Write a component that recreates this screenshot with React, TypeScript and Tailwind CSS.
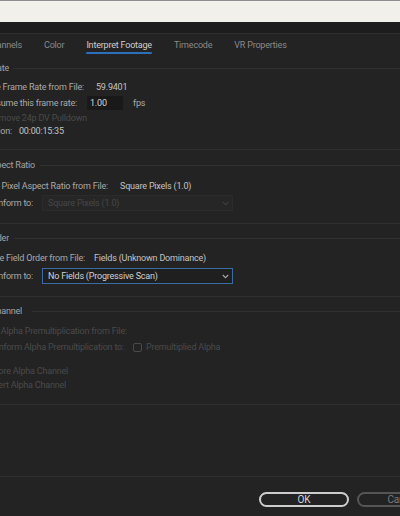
import React from "react";

// Clipped label: the start of the text runs off the left edge of the window,
// so the label is pinned by its right end.
function Label({ end, children, dim }: { end: number; children: React.ReactNode; dim?: boolean }) {
  return (
    <span
      className={
        "flex shrink-0 justify-end overflow-hidden whitespace-nowrap " +
        (dim ? "text-[#4a4a4a]" : "text-[#a9a9a9]")
      }
      style={{ width: end }}
    >
      {children}
    </span>
  );
}

function Chevron({ dim }: { dim?: boolean }) {
  return (
    <svg width="7" height="5" viewBox="0 0 7 5" className="shrink-0">
      <path d="M0.8 1 L3.5 3.7 L6.2 1" fill="none" stroke={dim ? "#3c3c3c" : "#a8a8a8"} strokeWidth="1.1" />
    </svg>
  );
}

function Legend({ end, lineStart, children }: { end: number; lineStart: number; children: React.ReactNode }) {
  return (
    <div className="flex h-[12px] items-center">
      <Label end={end}>
        <span className="text-[#a4a4a4]">{children}</span>
      </Label>
      <div className="h-px flex-1 bg-[#303030]" style={{ marginLeft: lineStart - end }} />
    </div>
  );
}

const Rule = ({ className }: { className: string }) => <div className={"h-px w-full bg-[#2f2f2f] " + className} />;

export default function App() {
  return (
    <div className="h-[516px] w-[400px] overflow-hidden bg-[#232323] font-['Roboto',sans-serif] text-[9px] leading-[12px] tracking-[-0.2px]">
      {/* window behind */}
      <div className="h-[22px] border-t border-[#8e8e8e] bg-[#f1f0eb]" />
      <div className="h-[12px] border-b border-[#2e2e2e] bg-[#1d1d1d]" />

      {/* tabs */}
      <div className="flex h-[28px] gap-[22px] pt-[5px] text-[9px]">
        <Label end={22}>
          <span className="text-[#8a8a8a]">Audio Channels</span>
        </Label>
        <span className="text-[#8a8a8a]">Color</span>
        <div className="flex flex-col">
          <span className="text-[#cfcfcf]">Interpret Footage</span>
          <div className="mt-[1px] h-[2px] rounded-full bg-[#2e6fbd]" />
        </div>
        <span className="text-[#8a8a8a]">Timecode</span>
        <span className="text-[#8a8a8a]">VR Properties</span>
      </div>

      {/* Frame Rate */}
      <Legend end={9} lineStart={13}>Frame Rate</Legend>
      <div className="mt-[6px] flex h-[14px] items-center">
        <Label end={84}>Use Frame Rate from File:</Label>
        <span className="ml-[12px] text-[#c4c4c4]">59.9401</span>
      </div>
      <div className="mt-[2px] flex h-[14px] items-center">
        <Label end={77}>Assume this frame rate:</Label>
        <div className="ml-[10px] flex h-[14px] w-[36px] items-center bg-[#191919] pl-[3px] text-[#d4d4d4]">1.00</div>
        <span className="ml-[10px] text-[#a9a9a9]">fps</span>
      </div>
      <div className="mt-[1px] flex h-[14px] items-center">
        <Label end={87} dim>Remove 24p DV Pulldown</Label>
      </div>
      <div className="mt-[-1px] flex h-[14px] items-center">
        <Label end={12}>Duration:</Label>
        <span className="ml-[7px] text-[#c4c4c4]">00:00:15:35</span>
      </div>
      <Rule className="mt-[11px]" />

      {/* Pixel Aspect Ratio */}
      <div className="mt-[9px]">
        <Legend end={35} lineStart={40}>Pixel Aspect Ratio</Legend>
      </div>
      <div className="mt-[8px] flex h-[14px] items-center">
        <Label end={108}>Use Pixel Aspect Ratio from File:</Label>
        <span className="ml-[12px] text-[#c4c4c4]">Square Pixels (1.0)</span>
      </div>
      <div className="mt-[2px] flex h-[16px] items-center">
        <Label end={33}>Conform to:</Label>
        <div className="ml-[9px] flex h-[16px] w-[191px] items-center justify-between border border-[#2b2b2b] bg-[#262626] pl-[5px] pr-[3px] text-[#464646]">
          <span>Square Pixels (1.0)</span>
          <Chevron dim />
        </div>
      </div>
      <Rule className="mt-[12px]" />

      {/* Field Order */}
      <div className="mt-[8px]">
        <Legend end={9} lineStart={13}>Field Order</Legend>
      </div>
      <div className="mt-[7px] flex h-[14px] items-center">
        <Label end={85}>Use Field Order from File:</Label>
        <span className="ml-[9px] text-[#c4c4c4]">Fields (Unknown Dominance)</span>
      </div>
      <div className="mt-[3px] flex h-[16px] items-center">
        <Label end={33}>Conform to:</Label>
        <div className="ml-[9px] flex h-[16px] w-[191px] items-center justify-between border border-[#3a6ba3] bg-[#1f1f1f] pl-[5px] pr-[3px] text-[#d0d0d0]">
          <span>No Fields (Progressive Scan)</span>
          <Chevron />
        </div>
      </div>
      <Rule className="mt-[12px]" />

      {/* Alpha Channel */}
      <div className="mt-[8px]">
        <Legend end={22} lineStart={32}>Alpha Channel</Legend>
      </div>
      <div className="mt-[7px] flex h-[14px] items-center">
        <Label end={127} dim>Use Alpha Premultiplication from File:</Label>
      </div>
      <div className="mt-[2px] flex h-[14px] items-center">
        <Label end={124} dim>Conform Alpha Premultiplication to:</Label>
        <div className="ml-[9px] h-[9px] w-[9px] rounded-[2px] border-[1.5px] border-[#4a4a4a]" />
        <span className="ml-[4px] text-[#4a4a4a]">Premultiplied Alpha</span>
      </div>
      <div className="mt-[10px] flex h-[14px] items-center">
        <Label end={68} dim>Ignore Alpha Channel</Label>
      </div>
      <div className="flex h-[14px] items-center">
        <Label end={66} dim>Invert Alpha Channel</Label>
      </div>
      <Rule className="mt-[12px]" />

      <Rule className="mt-[71px]" />

      {/* buttons */}
      <div className="mt-[15px] flex gap-[8px] pl-[259px]">
        <button className="flex h-[15px] w-[90px] shrink-0 items-center justify-center rounded-full border-2 border-[#cdcdcd] text-[10px] text-[#d6d6d6]">
          OK
        </button>
        <button className="flex h-[15px] w-[90px] shrink-0 items-center justify-center rounded-full border-2 border-[#555555] text-[10px] text-[#7a7a7a]">
          Cancel
        </button>
      </div>
    </div>
  );
}
